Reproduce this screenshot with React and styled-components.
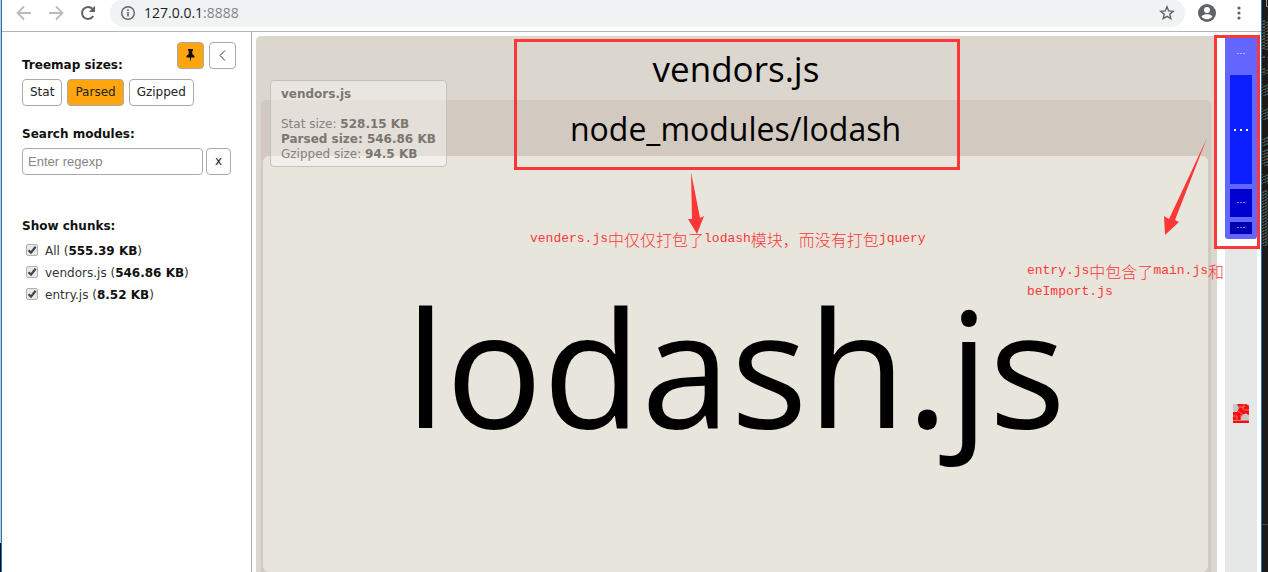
import React from "react";
import styled, { createGlobalStyle, css } from "styled-components";

const GlobalStyle = createGlobalStyle`
  * { box-sizing: border-box; }
  body { margin: 0; background: #fff; font: 12px/15px Verdana, "DejaVu Sans", sans-serif; color: #111; }
`;

const Desktop = styled.div`
  display: flex;
  height: 100vh;
  overflow: hidden;
`;
const LeftEdge = styled.div`
  width: 1px;
  background: linear-gradient(#c8c8c8 0 95%, #0b0b18 95%);
`;
const Browser = styled.div`
  flex: 1;
  min-width: 0;
  display: flex;
  flex-direction: column;
  border: solid #1b76bb;
  border-width: 0 1px;
  background: #fff;
`;
const RightEdge = styled.svg`
  flex: none;
  width: 6px;
  height: 100%;
  background: #1c1a18;
`;

const AddressBar = styled.header`
  display: flex;
  align-items: center;
  height: 32px;
  padding: 0 12px 6px 14px;
  border-bottom: 1px solid #b1b5b4;
`;
const NavButton = styled.button`
  display: flex;
  padding: 0;
  border: 0;
  background: none;
  width: 16px;
  margin-right: 16px;
  color: ${(p) => (p.$dim ? "#b9bbbd" : "#5f6368")};
`;
const UrlField = styled.div`
  flex: 1;
  display: flex;
  align-items: center;
  gap: 8px;
  height: 28px;
  margin: 0 12px 0 -2px;
  padding: 0 10px;
  border-radius: 14px;
  background: #f0f3f4;
  color: #5f6368;
`;
const UrlText = styled.div`
  flex: 1;
  font: 14px/20px "Open Sans", sans-serif;
  color: #80868b;
  b { font-weight: 400; color: #202124; }
`;
const EndTools = styled.div`
  display: flex;
  align-items: center;
  gap: 12px;
`;
const IconButton = styled.button`
  display: flex;
  padding: 0;
  border: 0;
  background: none;
  color: #5f6368;
`;

const Page = styled.main`
  flex: 1;
  min-height: 0;
  display: flex;
`;
const Sidebar = styled.aside`
  flex: none;
  width: 250px;
  padding: 10px 15px 0 20px;
  border-right: 1px solid #aaa;
`;
const SideTools = styled.div`
  display: flex;
  justify-content: flex-end;
  gap: 5px;
  height: 16px;
`;
const Button = styled.button`
  flex: none;
  height: 27px;
  padding: 0 7px;
  border: 1px solid #aaa;
  border-radius: 4px;
  background: ${(p) => (p.$active ? "#ffa50f" : "#fff")};
  color: #222;
  font: 12px/15px Verdana, "DejaVu Sans", sans-serif;
  ${(p) => p.$square && css`
    display: flex;
    align-items: center;
    justify-content: center;
    width: ${p.$square}px;
    padding: 0;
  `}
`;
const Heading = styled.div`
  display: block;
  font-weight: 700;
  margin-bottom: 6px;
`;
const Section = styled.section`
  margin-bottom: ${(p) => p.$gap || 0}px;
`;
const ButtonRow = styled.div`
  display: flex;
  gap: 5px;
`;
const SearchRow = styled.div`
  display: flex;
  gap: 3px;
`;
const SearchInput = styled.input`
  width: 181px;
  height: 27px;
  padding: 0 5px;
  border: 1px solid #aaa;
  border-radius: 4px;
  font: 13px "Liberation Sans", Arial, sans-serif;
  &::placeholder { color: #858585; }
`;
const Chunk = styled.label`
  display: flex;
  align-items: center;
  gap: 7px;
  height: 22px;
  padding-left: 4px;
  white-space: nowrap;
  color: #333;
  b { color: #111; }
`;
const Check = styled.input`
  appearance: none;
  width: 12px;
  height: 12px;
  margin: 0 0 3px;
  border: 1px solid #b0b0b0;
  border-radius: 2px;
  background: #e8e8e8 url("data:image/svg+xml,%3Csvg xmlns='http://www.w3.org/2000/svg' viewBox='0 0 10 10'%3E%3Cpath d='M1.5 5.2 4 7.6 8.6 1.8' fill='none' stroke='%23444' stroke-width='2.2'/%3E%3C/svg%3E") center / 10px;
`;

const Treemap = styled.section`
  position: relative;
  flex: 1;
  min-width: 0;
  display: flex;
  gap: 8px;
  padding: 4px 4px 0;
  font-family: "Segoe UI", "Open Sans", sans-serif;
  color: #000;
`;
const Vendors = styled.div`
  flex: 1;
  display: flex;
  flex-direction: column;
  padding: 0 6px 0 5px;
  border-radius: 5px 5px 0 0;
  background: #dbd6ce;
`;
const GroupTitle = styled.div`
  display: flex;
  justify-content: center;
  align-items: center;
  height: ${(p) => p.$height}px;
  font-size: ${(p) => p.$size}px;
`;
const Folder = styled.div`
  flex: 1;
  display: flex;
  flex-direction: column;
  padding: 0 3px 0 2px;
  border-radius: 5px 5px 0 0;
  background: #d2cac0;
`;
const Leaf = styled.div`
  flex: 1;
  display: flex;
  justify-content: center;
  align-items: center;
  padding-top: 4px;
  border-radius: 6px;
  background: #e8e5dd;
  font-size: 161px;
  line-height: 200px;
`;
const SideColumn = styled.div`
  flex: none;
  width: 32px;
  display: flex;
  flex-direction: column;
  align-items: center;
  background: #e5e8e7;
`;
const EntrySlot = styled.div`
  padding-bottom: 9px;
  background: #fff;
`;
const Entry = styled.div`
  width: 32px;
  padding: 2px 5px 5px;
  background: #6366ff;
  border-radius: 3px;
  display: flex;
  flex-direction: column;
  gap: 5px;
`;
const EntryPart = styled.div`
  display: flex;
  align-items: center;
  justify-content: center;
  height: ${(p) => p.$height}px;
  background: ${(p) => p.$fill || "transparent"};
  color: #fff;
`;
const Blob = styled.svg`
  margin-top: 156px;
`;

const Tooltip = styled.div`
  position: absolute;
  left: 18px;
  top: 48px;
  width: 177px;
  height: 87px;
  padding: 6px 10px;
  border: 1px solid #c3c1bd;
  border-radius: 4px;
  background: rgba(255, 255, 255, 0.4);
  color: #85827d;
  font: 12px/15px Verdana, "DejaVu Sans", sans-serif;
  white-space: nowrap;
  b { color: #7a7771; }
`;
const TipTitle = styled.div`
  margin-bottom: 15px;
  font-weight: 700;
  color: #7a7771;
`;
const Outline = styled.div`
  position: absolute;
  border: 3px solid #fc3737;
`;
const TitleOutline = styled(Outline)`
  left: 262px;
  top: 7px;
  width: 446px;
  height: 131px;
`;
const EntryOutline = styled(Outline)`
  right: 1px;
  top: 3px;
  width: 46px;
  height: 214px;
`;
const Note = styled.div`
  position: absolute;
  color: #fc3737;
`;
const VendorsNote = styled(Note)`
  left: 278px;
  top: 196px;
`;
const EntryNote = styled(Note)`
  right: 37px;
  top: 228px;
`;
const NoteLine = styled.div`
  display: flex;
  align-items: center;
  height: 21px;
  font: 16px/20px "Noto Sans CJK SC", sans-serif;
  font-weight: 300;
  white-space: nowrap;
`;
const Latin = styled.span`
  font: 13px/16px "Liberation Mono", monospace;
`;
const VendorsArrow = styled.svg`
  position: absolute;
  left: 436px;
  top: 140px;
`;
const EntryArrow = styled.svg`
  position: absolute;
  right: 53px;
  top: 106px;
`;

const Arrow = ({ flip }) => (
  <svg width="16" height="16" viewBox="0 0 16 16" fill="none" stroke="currentColor" strokeWidth="1.8">
    <path d={flip ? "M1 8H14.5M8 1.5 14.5 8 8 14.5" : "M15 8H1.5M8 1.5 1.5 8 8 14.5"} />
  </svg>
);

const chunks = [
  ["All", "555.39 KB"],
  ["vendors.js", "546.86 KB"],
  ["entry.js", "8.52 KB"],
];

const Dots = ({ size }) => (
  <svg width="16" height="4" viewBox="0 0 16 4" fill="currentColor">
    {[-1, 0, 1].map((n) => (
      <rect key={n} x={8 + n * size * 3 - size / 2} y="1" width={size} height={size} />
    ))}
  </svg>
);

const speckBands = [[20, 50], [56, 58], [68, 75], [84, 96], [108, 120], [137, 146], [149, 166], [174, 184], [190, 246]];
const speckColors = ["#2b5a50", "#43504b", "#6b4234", "#35557a", "#3c5a38", "#4a4640"];
const specks = speckBands.flatMap(([from, to]) =>
  Array.from({ length: (to - from) * 2 }, (_, i) => ({
    x: (i * 5 + from) % 6,
    y: from + (i >> 1),
    w: 1 + ((i * 7) % 3),
    fill: speckColors[(i * 11 + from + (i >> 2)) % 6],
  }))
);

export default function App() {
  return (
    <Desktop>
      <GlobalStyle />
      <LeftEdge />
      <Browser>
        <AddressBar>
          <NavButton $dim aria-label="Back"><Arrow /></NavButton>
          <NavButton $dim aria-label="Forward"><Arrow flip /></NavButton>
          <NavButton aria-label="Reload">
            <svg width="16" height="16" viewBox="0 0 16 16">
              <path d="M13.2 11A6 6 0 1 1 12.4 3.8" fill="none" stroke="currentColor" strokeWidth="2" />
              <path d="M15 .8V7H8.8Z" fill="currentColor" />
            </svg>
          </NavButton>
          <UrlField>
            <svg width="16" height="16" viewBox="0 0 16 16">
              <circle cx="8" cy="8" r="6.3" fill="none" stroke="currentColor" strokeWidth="1.4" />
              <path d="M7.2 7h1.6v4.5H7.2zM7.2 4.3h1.6v1.6H7.2z" fill="currentColor" />
            </svg>
            <UrlText><b>127.0.0.1</b>:8888</UrlText>
            <IconButton aria-label="Bookmark">
              <svg width="16" height="16" viewBox="0 0 16 16" fill="none" stroke="currentColor" strokeWidth="1.4">
                <path d="m8 1.8 1.7 4.1 4.5.4-3.4 2.9 1 4.4L8 11.3l-3.8 2.3 1-4.4-3.4-2.9 4.5-.4Z" />
              </svg>
            </IconButton>
          </UrlField>
          <EndTools>
            <IconButton aria-label="Profile">
              <svg width="20" height="20" viewBox="0 0 20 20">
                <circle cx="10" cy="10" r="9" fill="currentColor" />
                <circle cx="10" cy="7" r="3" fill="#fff" />
                <path d="M4.5 13.5C5.5 11.8 8 11.2 10 11.2s4.5.6 5.5 2.3C14.3 15.2 12.3 16.2 10 16.2s-4.3-1-5.5-2.700Z" fill="#fff" />
              </svg>
            </IconButton>
            <IconButton aria-label="Menu">
              <svg width="20" height="20" viewBox="0 0 20 20" fill="currentColor">
                <circle cx="10" cy="5" r="1.6" /><circle cx="10" cy="10" r="1.6" /><circle cx="10" cy="15" r="1.6" />
              </svg>
            </IconButton>
          </EndTools>
        </AddressBar>

        <Page>
          <Sidebar>
            <SideTools>
              <Button $active $square={27} aria-label="Pin">
                <svg width="9" height="13" viewBox="0 0 9 13" fill="#111">
                  <path d="M2 0H7V1.5L6.3 2V5L8.500 7V8.500H5.200L4.500 13 3.800 8.500H.5V7L2.700 5V2L2 1.500Z" />
                </svg>
              </Button>
              <Button $square={27} aria-label="Collapse">
                <svg width="7" height="11" viewBox="0 0 7 11" fill="none" stroke="#333">
                  <path d="M6 .5 1 5.5 6 10.5" />
                </svg>
              </Button>
            </SideTools>
            <Section $gap={21}>
              <Heading>Treemap sizes:</Heading>
              <ButtonRow>
                <Button>Stat</Button>
                <Button $active>Parsed</Button>
                <Button>Gzipped</Button>
              </ButtonRow>
            </Section>
            <Section $gap={44}>
              <Heading as="label" htmlFor="search">Search modules:</Heading>
              <SearchRow>
                <SearchInput id="search" placeholder="Enter regexp" />
                <Button $square={25}>x</Button>
              </SearchRow>
            </Section>
            <Section>
              <Heading>Show chunks:</Heading>
              {chunks.map(([name, size]) => (
                <Chunk key={name}>
                  <Check type="checkbox" defaultChecked />
                  <span>{name} (<b>{size}</b>)</span>
                </Chunk>
              ))}
            </Section>
          </Sidebar>

          <Treemap>
            <Vendors>
              <GroupTitle $height={64} $size={35}>vendors.js</GroupTitle>
              <Folder>
                <GroupTitle $height={56} $size={32}>node_modules/lodash</GroupTitle>
                <Leaf>lodash.js</Leaf>
              </Folder>
            </Vendors>
            <SideColumn>
              <EntrySlot>
                <Entry>
                  <EntryPart $height={32}><Dots size={1} /></EntryPart>
                  <EntryPart $height={109} $fill="#0b1fff"><Dots size={2} /></EntryPart>
                  <EntryPart $height={28} $fill="#0000d0"><Dots size={1} /></EntryPart>
                  <EntryPart $height={12} $fill="#0000b4"><Dots size={1} /></EntryPart>
                </Entry>
              </EntrySlot>
              <Blob width="16" height="19" viewBox="0 0 16 19">
                <rect width="16" height="19" fill="#fb0d0d" />
                <path d="M0 0H4L6 4 4 8H0ZM8 13 10 10.500 13 9.500 16 11V16H8ZM13 0H16V2Z" fill="#c8c8c8" />
                <path d="M6 3H11V0M10 3V6M11 6H16M5 7 10 11M0 12H4V16M8 11V16M0 16.500H16" fill="none" stroke="#f0a0a0" strokeWidth=".7" />
              </Blob>
            </SideColumn>

            <Tooltip>
              <TipTitle>vendors.js</TipTitle>
              <div>Stat size: <b>528.15 KB</b></div>
              <div><b>Parsed size: 546.86 KB</b></div>
              <div>Gzipped size: <b>94.5 KB</b></div>
            </Tooltip>
            <TitleOutline />
            <EntryOutline />
            <VendorsArrow width="18" height="64" viewBox="0 0 18 64" fill="#fc3737">
              <path d="M3 0 12 46 16 44 9 62 0 47H4Z" />
            </VendorsArrow>
            <VendorsNote>
              <NoteLine>
                <Latin>venders.js</Latin>中仅仅打包了<Latin>lodash</Latin>模块，而没有打包<Latin>jquery</Latin>
              </NoteLine>
            </VendorsNote>
            <EntryArrow width="44" height="98" viewBox="0 0 44 98" fill="#fc3737">
              <path d="M43 0 11 82 15 84 1 97 0 78 5 81Z" />
            </EntryArrow>
            <EntryNote>
              <NoteLine><Latin>entry.js</Latin>中包含了<Latin>main.js</Latin>和</NoteLine>
              <NoteLine><Latin>beImport.js</Latin></NoteLine>
            </EntryNote>
          </Treemap>
        </Page>
      </Browser>
      <RightEdge viewBox="0 0 6 572" preserveAspectRatio="xMidYMin slice" aria-hidden="true">
        {specks.map((s, i) => (
          <rect key={i} x={s.x} y={s.y} width={s.w} height="1" fill={s.fill} />
        ))}
        <rect y="524" width="6" height="1" fill="#444" />
        <path d="M4.500 0V6.500H6" fill="none" stroke="#999" />
      </RightEdge>
    </Desktop>
  );
}
